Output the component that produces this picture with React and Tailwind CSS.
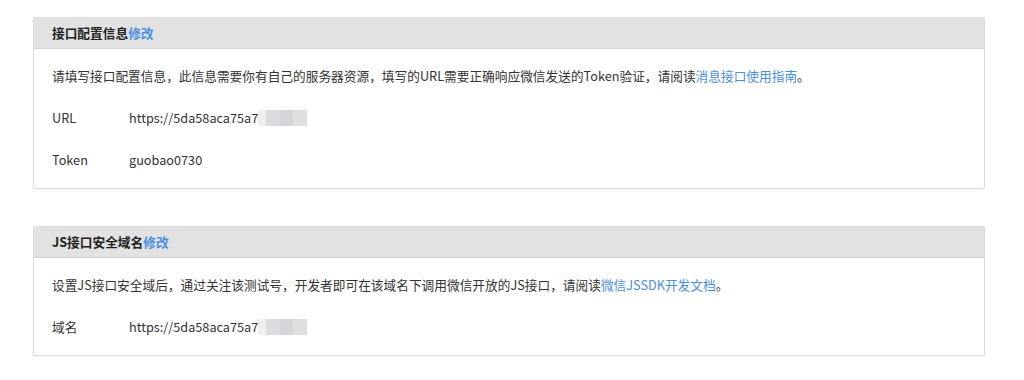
import React from "react";

const font = { fontFamily: '"Noto Sans CJK SC", "Noto Sans", sans-serif' };

function Blur() {
  return (
    <span className="inline-flex h-[16px] items-stretch align-middle">
      <span className="w-[8px] bg-[#efeff1]" />
      <span className="w-[14px] bg-[#dcdce0]" />
      <span className="w-[13px] bg-[#d6d6da]" />
      <span className="w-[14px] bg-[#dfdfe2]" />
    </span>
  );
}

function Panel({ title, children }) {
  return (
    <div className="w-[952px] border border-[#dcdcdc] rounded-[2px] bg-white shadow-[0_1px_2px_rgba(0,0,0,0.06)]">
      <div className="h-[31px] bg-[#e2e2e2] border-b border-[#d2d2d2] px-[18px] flex items-center text-[12.7px] font-bold text-[#222]">
        {title}
        <a className="text-[#4a90e2] cursor-pointer">修改</a>
      </div>
      <div className="px-[18px] pt-[17px] pb-[18px] text-[12.7px] text-[#333] space-y-[22px]">
        {children}
      </div>
    </div>
  );
}

function Row({ label, children }) {
  return (
    <div className="flex h-[20px] leading-[20px] items-center">
      <div className="w-[77px] shrink-0">{label}</div>
      <div className="flex items-center">{children}</div>
    </div>
  );
}

export default function App() {
  return (
    <div className="min-h-[380px] bg-white pt-[17px] pl-[33px]" style={font}>
      <Panel title="接口配置信息">
        <p className="h-[20px] leading-[20px]">
          请填写接口配置信息，此信息需要你有自己的服务器资源，填写的URL需要正确响应微信发送的Token验证，请阅读
          <a className="text-[#4a90e2] cursor-pointer">消息接口使用指南</a>。
        </p>
        <Row label="URL">
          https://5da58aca75a7<Blur />
        </Row>
        <Row label="Token">guobao0730</Row>
      </Panel>

      <div className="mt-[37px]">
        <Panel title="JS接口安全域名">
          <p className="h-[20px] leading-[20px]">
            设置JS接口安全域后，通过关注该测试号，开发者即可在该域名下调用微信开放的JS接口，请阅读
            <a className="text-[#4a90e2] cursor-pointer">微信JSSDK开发文档</a>。
          </p>
          <Row label="域名">
            https://5da58aca75a7<Blur />
          </Row>
        </Panel>
      </div>
    </div>
  );
}
